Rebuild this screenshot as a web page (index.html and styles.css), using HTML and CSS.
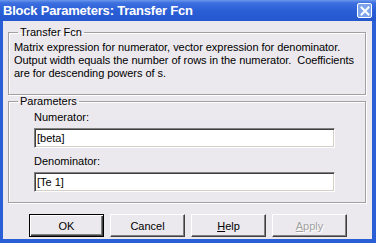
FILE: index.html
```html
<!DOCTYPE html>
<html lang="en">
<head>
    <meta charset="UTF-8">
    <title>Block Parameters: Transfer Fcn</title>
    <link rel="stylesheet" href="styles.css">
</head>
<body>
    <div class="window">
        <div class="titlebar">
            <span class="title">Block Parameters: Transfer Fcn</span>
            <span class="close">
                <svg width="10" height="10" viewBox="0 0 10 10">
                    <path d="M1.5 1.5 L8.5 8.5 M8.5 1.5 L1.5 8.5" stroke="#fff" stroke-width="2" stroke-linecap="square"/>
                </svg>
            </span>
        </div>

        <div class="client">
            <fieldset class="group">
                <legend>Transfer Fcn</legend>
                <p class="desc">Matrix expression for numerator, vector expression for denominator.<br>Output width equals the number of rows in the numerator.&nbsp; Coefficients<br>are for descending powers of s.</p>
            </fieldset>

            <fieldset class="group">
                <legend>Parameters</legend>
                <div class="params">
                    <div class="field-label">Numerator:</div>
                    <div class="edit">[beta]</div>
                    <div class="field-label">Denominator:</div>
                    <div class="edit">[Te 1]</div>
                </div>
            </fieldset>

            <div class="buttons">
                <button class="btn default">OK</button>
                <button class="btn">Cancel</button>
                <button class="btn"><u>H</u>elp</button>
                <button class="btn disabled"><u>A</u>pply</button>
            </div>
        </div>
    </div>
</body>
</html>
```

FILE: styles.css
```css
/* dialog styles */
body {
    margin: 0;
    font-family: "Liberation Sans", Arial, sans-serif;
    font-size: 11px;
    color: #000;
    background-color: #ece9ee;
}

.window {
    width: 376px;
    height: 243px;
    display: flex;
    flex-direction: column;
}

.titlebar {
    height: 21px;
    display: flex;
    align-items: center;
    justify-content: space-between;
    padding: 0 4px 0 3px;
    background: linear-gradient(#6a97ec 0, #3c6fdf 3px, #2b5fd6 50%, #2557cf 100%);
    box-sizing: border-box;
}

.title {
    color: #fff;
    font-weight: bold;
    font-size: 13px;
    letter-spacing: -0.2px;
}

.close {
    width: 13px;
    height: 13px;
    display: flex;
    align-items: center;
    justify-content: center;
    border: 1px solid #fff;
    border-radius: 2px;
    background-color: #7da3ec;
}

.client {
    flex: 1;
    display: flex;
    flex-direction: column;
    padding: 5px 6px 0 5px;
    border-left: 3px solid #2b5fd6;
    border-right: 4px solid #2b5fd6;
    border-bottom: 4px solid #2b5fd6;
}

.group {
    margin: 0;
    padding: 2px 6px 0 5px;
    border: 1px solid #a0a0a0;
    box-shadow: inset 1px 1px 0 #fff, 1px 1px 0 #fff;
}

.group legend {
    padding: 0 2px;
    margin-left: 4px;
    line-height: 13px;
}

.desc {
    margin: 0 0 14px 0;
    line-height: 13px;
    letter-spacing: -0.05px;
}

.params {
    padding: 1px 24px 10px 20px;
}

.field-label {
    line-height: 13px;
    margin-bottom: 4px;
}

.edit {
    height: 20px;
    line-height: 18px;
    padding: 0 2px;
    margin-bottom: 7px;
    box-sizing: border-box;
    background-color: #fff;
    border: 1px solid;
    border-color: #808080 #fff #fff #808080;
    box-shadow: inset 1px 1px 0 #404040, inset -1px -1px 0 #d4d0c8;
}

.edit:last-child {
    margin-bottom: 0;
}

.buttons {
    display: flex;
    justify-content: flex-end;
    gap: 6px;
    margin-top: 11px;
    padding-right: 19px;
}

.btn {
    width: 75px;
    height: 23px;
    padding: 0;
    font-family: inherit;
    font-size: 11px;
    color: #000;
    background-color: #ece9ee;
    border: 1px solid;
    border-color: #fff #404040 #404040 #fff;
    box-shadow: inset -1px -1px 0 #808080;
}

.btn.default {
    border: 1px solid #000;
    box-shadow: inset 1px 1px 0 #fff, inset -1px -1px 0 #404040, inset -2px -2px 0 #808080;
}

.btn.disabled {
    color: #a0a0a0;
    text-shadow: 1px 1px 0 #fff;
}
```
